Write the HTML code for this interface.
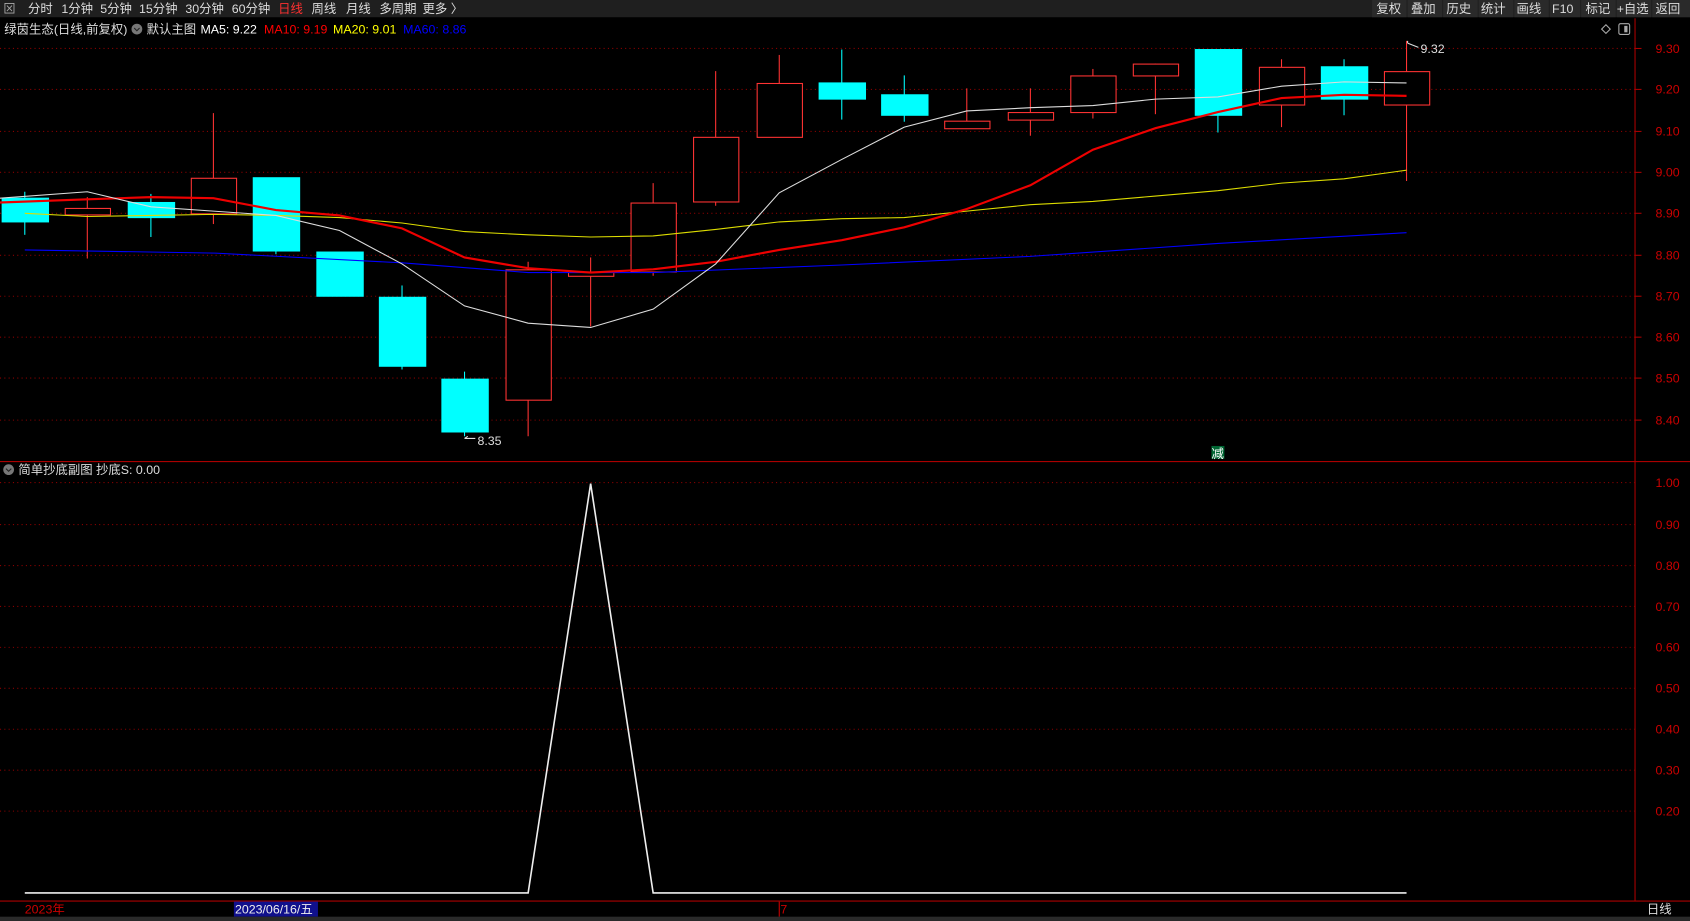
<!DOCTYPE html>
<html><head><meta charset="utf-8"><style>
html,body{margin:0;padding:0;background:#000;width:1690px;height:921px;overflow:hidden}
svg{display:block}
text{font-family:"Liberation Sans","Noto Sans CJK SC",sans-serif;font-size:11.5px}
</style></head><body>
<svg width="1690" height="921" viewBox="0 0 1568 855" preserveAspectRatio="none">
<rect width="1568" height="855" fill="#000"/>
<rect x="0" y="0" width="1568" height="16" fill="#1f1f1f"/>
<g fill="#ddd">
<text x="3" y="12" fill="#aaa" font-size="10">⊠</text>
<text x="26" y="12">分时</text><text x="57" y="12">1分钟</text><text x="93" y="12">5分钟</text>
<text x="129" y="12">15分钟</text><text x="172" y="12">30分钟</text><text x="215" y="12">60分钟</text>
<text x="258" y="12" fill="#ff3030">日线</text><text x="289" y="12">周线</text><text x="321" y="12">月线</text>
<text x="352" y="12">多周期</text><text x="392" y="12">更多 〉</text>
</g>
<g fill="#2a2a2a"><rect x="1273" y="0" width="32" height="16"/><rect x="1306" y="0" width="32" height="16"/><rect x="1339" y="0" width="32" height="16"/><rect x="1372" y="0" width="32" height="16"/><rect x="1405" y="0" width="32" height="16"/><rect x="1438" y="0" width="28" height="16"/><rect x="1467" y="0" width="32" height="16"/><rect x="1500" y="0" width="32" height="16"/><rect x="1533" y="0" width="35" height="16"/></g>
<g fill="#ddd"><text x="1277" y="12">复权</text><text x="1309" y="12">叠加</text><text x="1342" y="12">历史</text><text x="1374" y="12">统计</text><text x="1407" y="12">画线</text><text x="1440" y="12">F10</text><text x="1471" y="12">标记</text><text x="1500" y="12">+自选</text><text x="1536" y="12">返回</text></g>
<text x="4" y="31" fill="#ddd">绿茵生态(日线,前复权)</text>
<circle cx="127" cy="27" r="5" fill="#777"/><path d="M124.5 26l2.5 2.5 2.5-2.5" stroke="#222" fill="none"/>
<text x="136" y="31" fill="#ddd">默认主图</text>
<text x="186" y="31" fill="#fff">MA5: 9.22</text>
<text x="245" y="31" fill="#f00">MA10: 9.19</text>
<text x="309" y="31" fill="#ff0">MA20: 9.01</text>
<text x="374" y="31" fill="#00f">MA60: 8.86</text>
<path d="M1490 23l4 4-4 4-4-4z" stroke="#aaa" fill="none"/>
<rect x="1502" y="22" width="10" height="10" rx="1.5" stroke="#aaa" fill="none"/><rect x="1507" y="24" width="3" height="6" fill="#aaa"/>
<line x1="1517" y1="17" x2="1517" y2="836" stroke="#a00"/>
<line x1="0" y1="428.5" x2="1568" y2="428.5" stroke="#a00"/>
<line x1="0" y1="836.5" x2="1568" y2="836.5" stroke="#a00"/>
<g stroke="#800" stroke-dasharray="1 3">
<line x1="0" x2="1517" y1="45" y2="45"/><line x1="0" x2="1517" y1="83" y2="83"/><line x1="0" x2="1517" y1="122" y2="122"/><line x1="0" x2="1517" y1="160" y2="160"/><line x1="0" x2="1517" y1="198" y2="198"/><line x1="0" x2="1517" y1="237" y2="237"/><line x1="0" x2="1517" y1="275" y2="275"/><line x1="0" x2="1517" y1="313" y2="313"/><line x1="0" x2="1517" y1="351" y2="351"/><line x1="0" x2="1517" y1="390" y2="390"/>
<line x1="0" x2="1517" y1="448" y2="448"/><line x1="0" x2="1517" y1="487" y2="487"/><line x1="0" x2="1517" y1="525" y2="525"/><line x1="0" x2="1517" y1="563" y2="563"/><line x1="0" x2="1517" y1="601" y2="601"/><line x1="0" x2="1517" y1="639" y2="639"/><line x1="0" x2="1517" y1="677" y2="677"/><line x1="0" x2="1517" y1="715" y2="715"/><line x1="0" x2="1517" y1="753" y2="753"/>
</g>
<g stroke="#a00"><line x1="1517" x2="1523" y1="45" y2="45"/><line x1="1517" x2="1523" y1="83" y2="83"/><line x1="1517" x2="1523" y1="122" y2="122"/><line x1="1517" x2="1523" y1="160" y2="160"/><line x1="1517" x2="1523" y1="198" y2="198"/><line x1="1517" x2="1523" y1="237" y2="237"/><line x1="1517" x2="1523" y1="275" y2="275"/><line x1="1517" x2="1523" y1="313" y2="313"/><line x1="1517" x2="1523" y1="351" y2="351"/><line x1="1517" x2="1523" y1="390" y2="390"/></g>
<g fill="#c00">
<text x="1536" y="49">9.30</text><text x="1536" y="87">9.20</text><text x="1536" y="126">9.10</text><text x="1536" y="164">9.00</text><text x="1536" y="202">8.90</text><text x="1536" y="241">8.80</text><text x="1536" y="279">8.70</text><text x="1536" y="317">8.60</text><text x="1536" y="355">8.50</text><text x="1536" y="394">8.40</text>
<text x="1536" y="452">1.00</text><text x="1536" y="491">0.90</text><text x="1536" y="529">0.80</text><text x="1536" y="567">0.70</text><text x="1536" y="605">0.60</text><text x="1536" y="643">0.50</text><text x="1536" y="681">0.40</text><text x="1536" y="719">0.30</text><text x="1536" y="757">0.20</text>
</g>
<g stroke="#0ff" fill="#0ff">
<line x1="23" y1="178" x2="23" y2="218"/><rect x="2" y="184" width="43" height="22"/>
<line x1="140" y1="180" x2="140" y2="220"/><rect x="119" y="188" width="43" height="14"/>
<line x1="256" y1="165" x2="256" y2="236"/><rect x="235" y="165" width="43" height="68"/>
<line x1="315" y1="234" x2="315" y2="275"/><rect x="294" y="234" width="43" height="41"/>
<line x1="373" y1="265" x2="373" y2="343"/><rect x="352" y="276" width="43" height="64"/>
<line x1="431" y1="345" x2="431" y2="405"/><rect x="410" y="352" width="43" height="49"/>
<line x1="781" y1="46" x2="781" y2="111"/><rect x="760" y="77" width="43" height="15"/>
<line x1="839" y1="70" x2="839" y2="113"/><rect x="818" y="88" width="43" height="19"/>
<line x1="1130" y1="46" x2="1130" y2="123"/><rect x="1109" y="46" width="43" height="61"/>
<line x1="1247" y1="55" x2="1247" y2="107"/><rect x="1226" y="62" width="43" height="30"/>
</g>
<g stroke="#f33" fill="#000">
<line x1="81" y1="183" x2="81" y2="240"/><rect x="60.5" y="193.5" width="42" height="6"/>
<line x1="198" y1="105" x2="198" y2="208"/><rect x="177.5" y="165.5" width="42" height="33"/>
<line x1="490" y1="243" x2="490" y2="405"/><rect x="469.5" y="250.5" width="42" height="121"/>
<line x1="548" y1="239" x2="548" y2="303"/><rect x="527.5" y="252.5" width="42" height="4"/>
<line x1="606" y1="170" x2="606" y2="256"/><rect x="585.5" y="188.5" width="42" height="64"/>
<line x1="664" y1="66" x2="664" y2="191"/><rect x="643.5" y="127.5" width="42" height="60"/>
<line x1="723" y1="51" x2="723" y2="127"/><rect x="702.5" y="77.5" width="42" height="50"/>
<line x1="897" y1="82" x2="897" y2="119"/><rect x="876.5" y="112.5" width="42" height="7"/>
<line x1="956" y1="82" x2="956" y2="126"/><rect x="935.5" y="104.5" width="42" height="7"/>
<line x1="1014" y1="64" x2="1014" y2="110"/><rect x="993.5" y="70.5" width="42" height="34"/>
<line x1="1072" y1="59" x2="1072" y2="106"/><rect x="1051.5" y="59.5" width="42" height="11"/>
<line x1="1189" y1="55" x2="1189" y2="118"/><rect x="1168.5" y="62.5" width="42" height="35"/>
<line x1="1305" y1="38" x2="1305" y2="168"/><rect x="1284.5" y="66.5" width="42" height="31"/>
</g>
<polyline fill="none" stroke="#00f" stroke-width="1" points="23,232 200,235 373,244 490,253 606,253 781,246 956,238 1130,226 1305,216"/>
<polyline fill="none" stroke="#dd0" stroke-width="1" points="23,198 81,201 140,200 198,199 256,200 315,202 373,207 431,215 490,218 548,220 606,219 664,213 723,206 781,203 839,202 897,196 956,190 1014,187 1072,182 1130,177 1189,170 1247,166 1305,158"/>
<polyline fill="none" stroke="#e00" stroke-width="2" points="0,188 81,185 140,183 198,184 256,195 315,200 373,212 431,239 490,249 548,253 606,250 664,243 723,232 781,223 839,211 897,194 956,172 1014,139 1072,119 1130,104 1189,91 1247,88 1305,89"/>
<polyline fill="none" stroke="#ddd" stroke-width="1" points="0,184 81,178 140,192 198,196 256,200 315,214 373,245 431,284 490,300 548,304 606,287 664,245 723,179 781,148 839,118 897,103 956,100 1014,98 1072,92 1130,90 1189,80 1247,76 1305,77"/>
<text x="443" y="413" fill="#ddd" font-size="11">8.35</text><path d="M431 407h10M431 407l3-2" stroke="#ddd" fill="none"/>
<text x="1318" y="49" fill="#ddd" font-size="11">9.32</text><path d="M1306 40l10 4M1306 40l0-2" stroke="#ddd" fill="none"/>
<rect x="1124" y="414" width="12" height="12" fill="#063"/><text x="1124" y="425" fill="#fff" font-size="10">减</text>
<circle cx="8" cy="436" r="5" fill="#777"/><path d="M5.5 435l2.5 2.5 2.5-2.5" stroke="#222" fill="none"/>
<text x="17" y="440" fill="#ddd">简单抄底副图 抄底S: 0.00</text>
<polyline fill="none" stroke="#eee" stroke-width="1.5" points="23,829 490,829 548,449 606,829 1305,829"/>
<text x="23" y="848" fill="#c00">2023年</text>
<rect x="217" y="837" width="78" height="14" fill="#10108c"/>
<text x="218" y="848" fill="#eee">2023/06/16/五</text>
<line x1="723" y1="837" x2="723" y2="851" stroke="#c00"/><text x="724" y="848" fill="#c00">7</text>
<text x="1528" y="848" fill="#ddd">日线</text>
<rect x="0" y="851" width="1568" height="4" fill="#2a2a2a"/>
</svg>
</body></html>
